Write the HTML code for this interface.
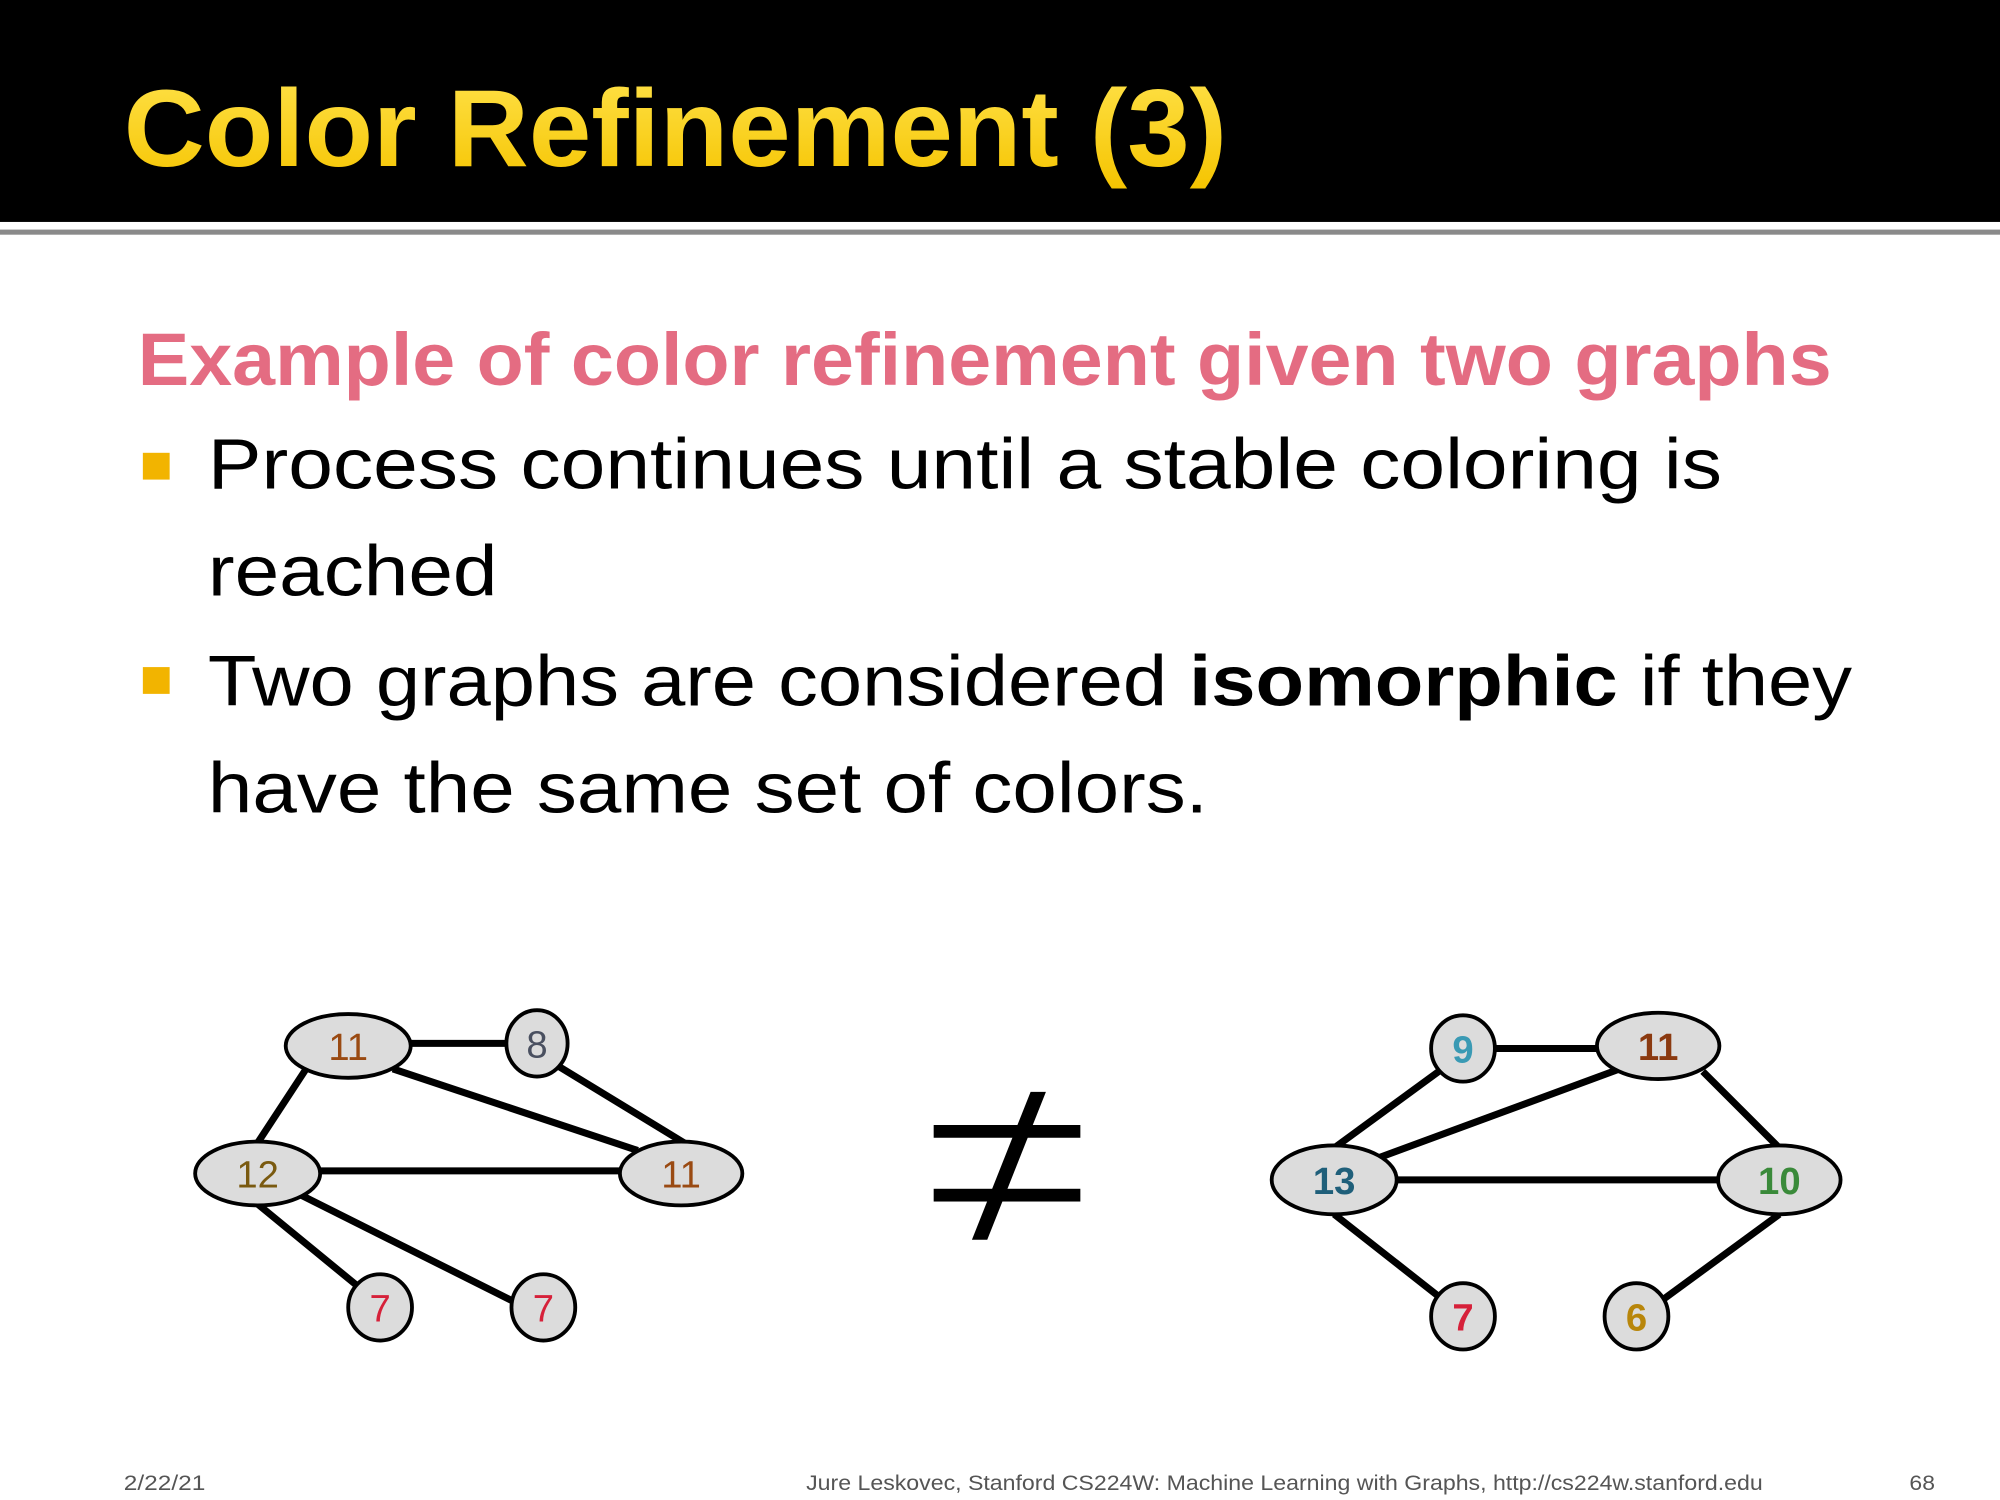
<!DOCTYPE html>
<html><head><meta charset="utf-8"><style>html,body{margin:0;padding:0;background:#fff}svg{display:block}</style></head>
<body>
<svg width="2000" height="1500" viewBox="0 0 1568 1176" xmlns="http://www.w3.org/2000/svg">
<defs><linearGradient id="yg" x1="0" y1="0" x2="0" y2="1"><stop offset="0" stop-color="#ffe24a"/><stop offset="1" stop-color="#f5c400"/></linearGradient></defs>
<rect x="0" y="0" width="1568" height="174" fill="#000"/>
<rect x="0" y="180" width="1568" height="4" fill="#8a8a8a"/>
<text x="97" y="130" font-family="Liberation Sans, sans-serif" font-weight="bold" font-size="86" fill="url(#yg)" textLength="865" lengthAdjust="spacingAndGlyphs">Color Refinement (3)</text>
<g font-family="Liberation Sans, sans-serif">
<text x="108" y="302" font-weight="bold" font-size="58" fill="#e46c82" textLength="1328" lengthAdjust="spacingAndGlyphs">Example of color refinement given two graphs</text>
<rect x="112" y="355" width="21" height="21" fill="#f2b400"/>
<rect x="112" y="523" width="21" height="21" fill="#f2b400"/>
<text x="163" y="383" font-size="56" fill="#000" textLength="1187" lengthAdjust="spacingAndGlyphs">Process continues until a stable coloring is</text>
<text x="163" y="467" font-size="56" fill="#000" textLength="227" lengthAdjust="spacingAndGlyphs">reached</text>
<text x="163" y="553" font-size="56" fill="#000" textLength="1289" lengthAdjust="spacingAndGlyphs">Two graphs are considered <tspan font-weight="bold">isomorphic</tspan> if they</text>
<text x="163" y="637" font-size="56" fill="#000" textLength="784" lengthAdjust="spacingAndGlyphs">have the same set of colors.</text>
</g>
<g stroke="#000" stroke-width="5.5" stroke-linecap="butt">
<line x1="322" y1="818" x2="397" y2="818"/>
<line x1="240" y1="838" x2="202" y2="896"/>
<line x1="308" y1="838" x2="500" y2="902"/>
<line x1="438" y1="836" x2="538" y2="897"/>
<line x1="250" y1="918" x2="487" y2="918"/>
<line x1="202" y1="944" x2="280" y2="1008"/>
<line x1="236" y1="937" x2="402" y2="1020"/>
<line x1="1173" y1="822" x2="1252" y2="822"/>
<line x1="1128" y1="840" x2="1046" y2="900"/>
<line x1="1270" y1="838" x2="1080" y2="908"/>
<line x1="1335" y1="840" x2="1395" y2="900"/>
<line x1="1095" y1="925" x2="1347" y2="925"/>
<line x1="1046" y1="952" x2="1130" y2="1018"/>
<line x1="1395" y1="952" x2="1305" y2="1018"/>
</g>
<g fill="#dcdcdc" stroke="#000" stroke-width="3">
<ellipse cx="273" cy="820" rx="49" ry="25"/>
<ellipse cx="421" cy="818" rx="24" ry="26"/>
<ellipse cx="202" cy="920" rx="49" ry="25"/>
<ellipse cx="534" cy="920" rx="48" ry="25"/>
<ellipse cx="298" cy="1025" rx="25" ry="26"/>
<ellipse cx="426" cy="1025" rx="25" ry="26"/>
<ellipse cx="1147" cy="822" rx="25" ry="26"/>
<ellipse cx="1300" cy="820" rx="48" ry="26"/>
<ellipse cx="1046" cy="925" rx="49" ry="27"/>
<ellipse cx="1395" cy="925" rx="48" ry="27"/>
<ellipse cx="1147" cy="1032" rx="25" ry="26"/>
<ellipse cx="1283" cy="1032" rx="25" ry="26"/>
</g>
<g font-family="Liberation Sans, sans-serif" font-size="30" text-anchor="middle">
<text x="273" y="831" fill="#9a4a12">11</text>
<text x="421" y="829" fill="#4a5060">8</text>
<text x="202" y="931" fill="#7a5a10">12</text>
<text x="534" y="931" fill="#9a4a12">11</text>
<text x="298" y="1036" fill="#d6213a">7</text>
<text x="426" y="1036" fill="#d6213a">7</text>
<g font-weight="bold">
<text x="1147" y="833" fill="#3a9ab4">9</text>
<text x="1300" y="831" fill="#8b3a10">11</text>
<text x="1046" y="936" fill="#1f5f7a">13</text>
<text x="1395" y="936" fill="#3a8a3a">10</text>
<text x="1147" y="1043" fill="#d6213a">7</text>
<text x="1283" y="1043" fill="#b8860b">6</text>
</g>
</g>
<g fill="#000">
<rect x="732" y="882" width="115" height="10"/>
<rect x="732" y="932" width="115" height="10"/>
<polygon points="808,856 820,856 774,972 762,972"/>
</g>
<g font-family="Liberation Sans, sans-serif" font-size="17" fill="#555">
<text x="97" y="1168" textLength="64" lengthAdjust="spacingAndGlyphs">2/22/21</text>
<text x="632" y="1168" textLength="750" lengthAdjust="spacingAndGlyphs">Jure Leskovec, Stanford CS224W: Machine Learning with Graphs, http://cs224w.stanford.edu</text>
<text x="1497" y="1168" textLength="20" lengthAdjust="spacingAndGlyphs">68</text>
</g>
</svg>
</body></html>
